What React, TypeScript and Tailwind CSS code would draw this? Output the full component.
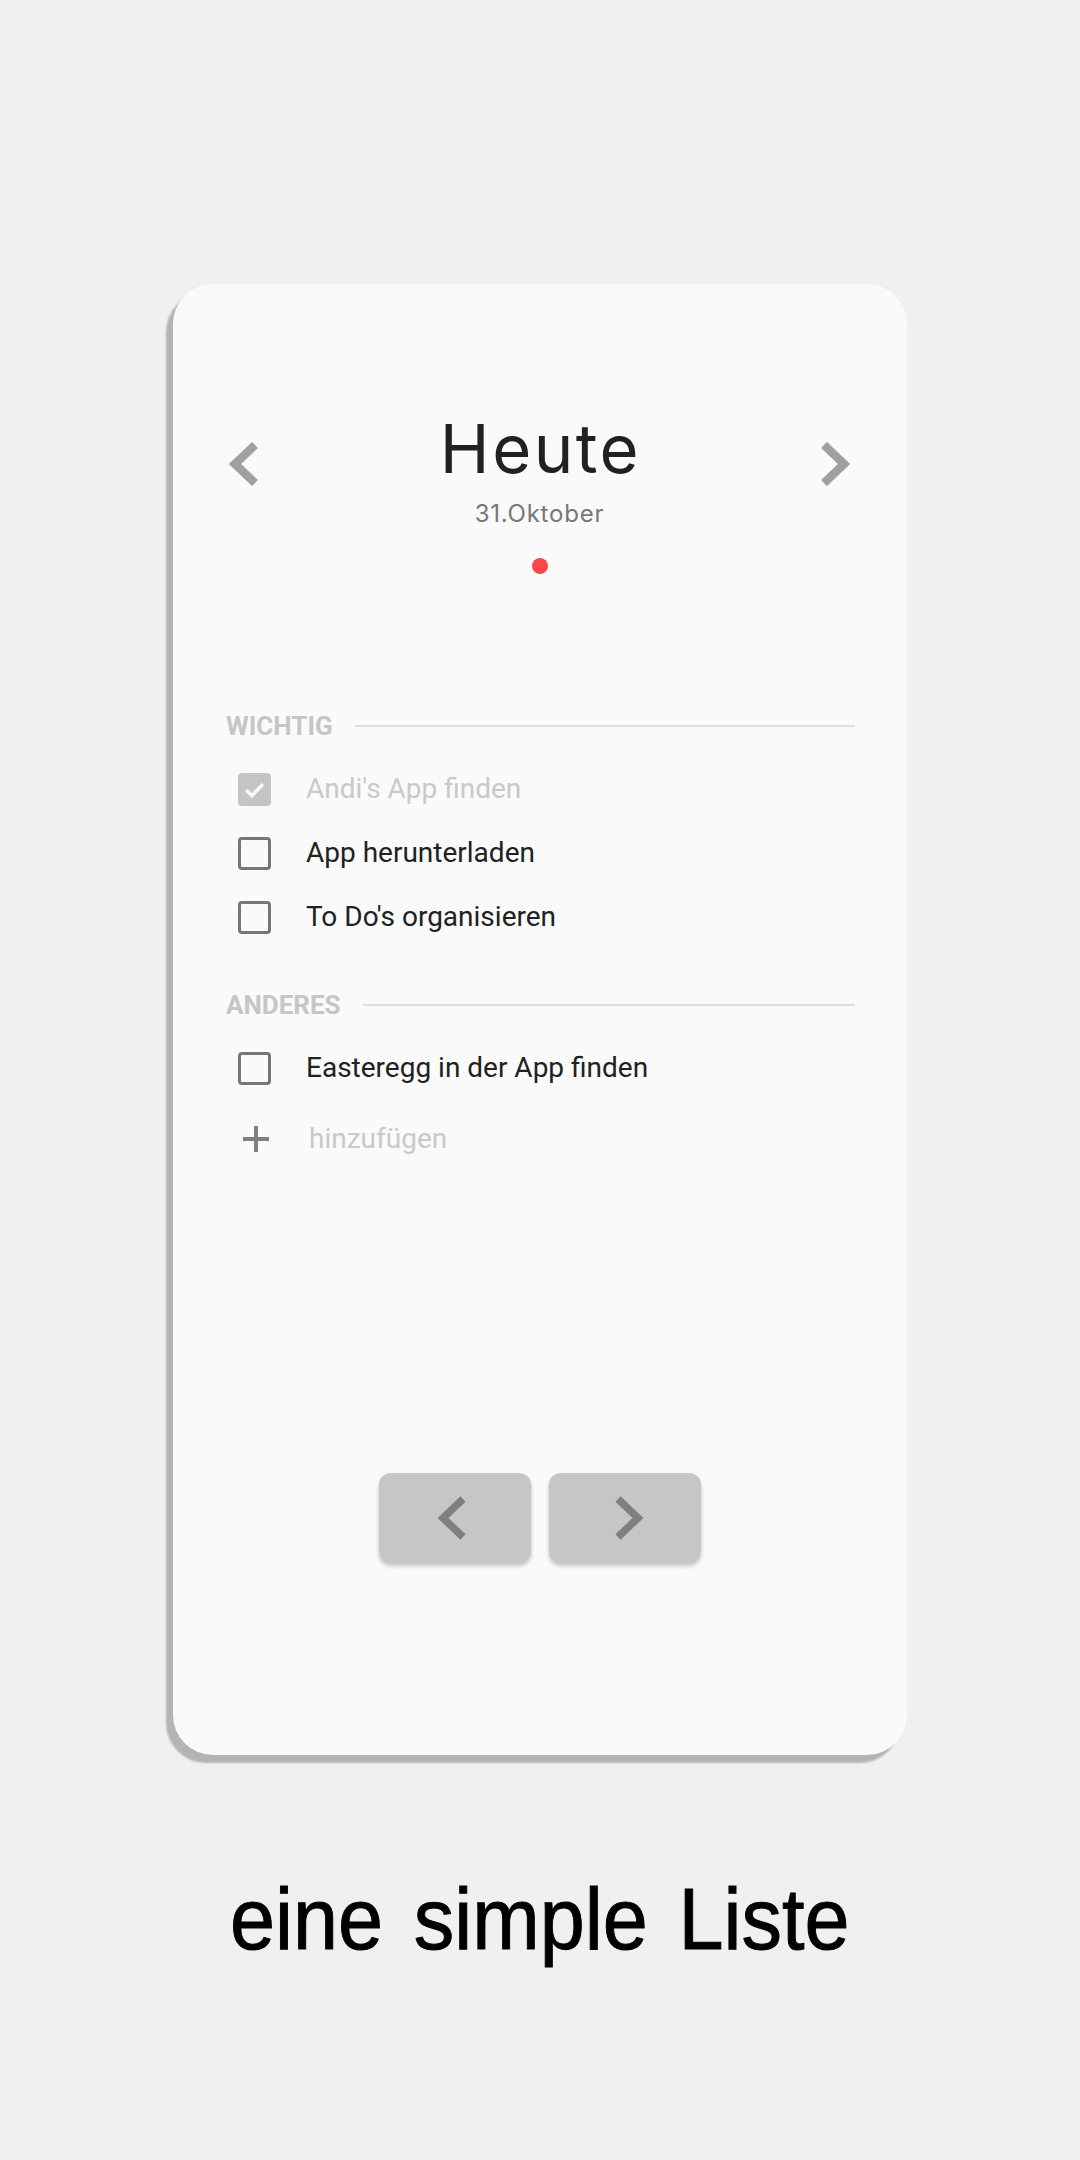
import React from "react";

function Chevron({ dir, color, w, h, sw }: { dir: "left" | "right"; color: string; w: number; h: number; sw: number }) {
  const pts = dir === "left" ? `${w - 3},3 7,${h / 2} ${w - 3},${h - 3}` : `3,3 ${w - 7},${h / 2} 3,${h - 3}`;
  return (
    <svg width={w} height={h} viewBox={`0 0 ${w} ${h}`}>
      <polyline points={pts} fill="none" stroke={color} strokeWidth={sw} strokeLinejoin="miter" strokeLinecap="butt" />
    </svg>
  );
}

function Checkbox({ checked }: { checked?: boolean }) {
  if (checked) {
    return (
      <div className="w-[33px] h-[33px] rounded-[4px] bg-[#c4c4c4] flex items-center justify-center">
        <svg width="25" height="25" viewBox="0 0 24 24">
          <polyline points="4,12.5 9.5,18 20,7" fill="none" stroke="#fafafa" strokeWidth="3.4" />
        </svg>
      </div>
    );
  }
  return <div className="w-[33px] h-[33px] rounded-[4px] border-[3px] border-[#767676]" />;
}

function Item({ text, checked }: { text: string; checked?: boolean }) {
  return (
    <div className="h-[64px] flex items-center pl-[65px]">
      <Checkbox checked={checked} />
      <span
        className={`ml-[35px] text-[28px] leading-[34px] ${checked ? "text-[#c9c9c9]" : "text-[#212121]"}`}
        style={{ fontFamily: "Roboto, sans-serif" }}
      >
        {text}
      </span>
    </div>
  );
}

function Section({ label }: { label: string }) {
  return (
    <div className="flex items-center h-[30px] pl-[53px] pr-[52px]">
      <span className="text-[26px] leading-[30px] font-bold text-[#c6c6c6]" style={{ fontFamily: "Roboto, sans-serif" }}>
        {label}
      </span>
      <div className="flex-1 h-[2px] bg-[#dedede] ml-[22px]" />
    </div>
  );
}

export default function App() {
  return (
    <div className="w-[1080px] h-[2160px] bg-[#f0f0f0] flex flex-col items-center pt-[284px]">
      <div className="w-[734px] h-[1471px] rounded-[40px] bg-[#fafafa] shadow-[-7px_8px_2px_#b4b4b4] flex flex-col">
        <div className="flex items-start pl-[55px] pr-[56px] mt-[130px]">
          <div className="mt-[28px]">
            <Chevron dir="left" color="#a0a0a0" w={30} h={44} sw={8.5} />
          </div>
          <div className="flex-1 flex flex-col items-center">
            <div
              className="text-[67px] leading-[70px] text-[#212121] tracking-[2.5px] pl-[2px]"
              style={{ fontFamily: "Inter, sans-serif" }}
            >
              Heute
            </div>
            <div
              className="mt-[15px] text-[24px] leading-[30px] text-[#777777] tracking-[0.8px]"
              style={{ fontFamily: "Inter, sans-serif" }}
            >
              31.Oktober
            </div>
            <div className="mt-[29px] w-[16px] h-[16px] rounded-full bg-[#ff4646]" />
          </div>
          <div className="mt-[28px]">
            <Chevron dir="right" color="#a0a0a0" w={30} h={44} sw={8.5} />
          </div>
        </div>

        <div className="mt-[137px]">
          <Section label="WICHTIG" />
        </div>
        <div className="mt-[16px]">
          <Item text="Andi's App finden" checked />
          <Item text="App herunterladen" />
          <Item text="To Do's organisieren" />
        </div>

        <div className="mt-[41px]">
          <Section label="ANDERES" />
        </div>
        <div className="mt-[16px]">
          <Item text="Easteregg in der App finden" />
        </div>
        <div className="h-[64px] flex items-center pl-[70px] mt-[7px]">
          <svg width="26" height="26" viewBox="0 0 26 26">
            <rect x="11" y="0" width="4" height="26" fill="#808080" />
            <rect x="0" y="11" width="26" height="4" fill="#808080" />
          </svg>
          <span className="ml-[40px] text-[28px] leading-[34px] text-[#c9c9c9]" style={{ fontFamily: "Roboto, sans-serif" }}>
            hinzufügen
          </span>
        </div>

        <div className="mt-[302px] flex justify-center gap-[18px]">
          <div className="w-[152px] h-[90px] rounded-[12px] bg-[#c6c6c6] shadow-[0_3px_4px_rgba(0,0,0,0.22)] flex items-center justify-center">
            <div className="mr-[9px]">
              <Chevron dir="left" color="#7f7f7f" w={30} h={44} sw={7.5} />
            </div>
          </div>
          <div className="w-[152px] h-[90px] rounded-[12px] bg-[#c6c6c6] shadow-[0_3px_4px_rgba(0,0,0,0.22)] flex items-center justify-center">
            <div className="ml-[9px]">
              <Chevron dir="right" color="#7f7f7f" w={30} h={44} sw={7.5} />
            </div>
          </div>
        </div>
      </div>

      <div
        className="mt-[114px] text-[88px] leading-[100px] text-black [word-spacing:9px] scale-x-[0.92] whitespace-nowrap [-webkit-text-stroke:1px_black]"
        style={{ fontFamily: "'Liberation Sans', Arial, sans-serif" }}
      >
        eine simple Liste
      </div>
    </div>
  );
}
